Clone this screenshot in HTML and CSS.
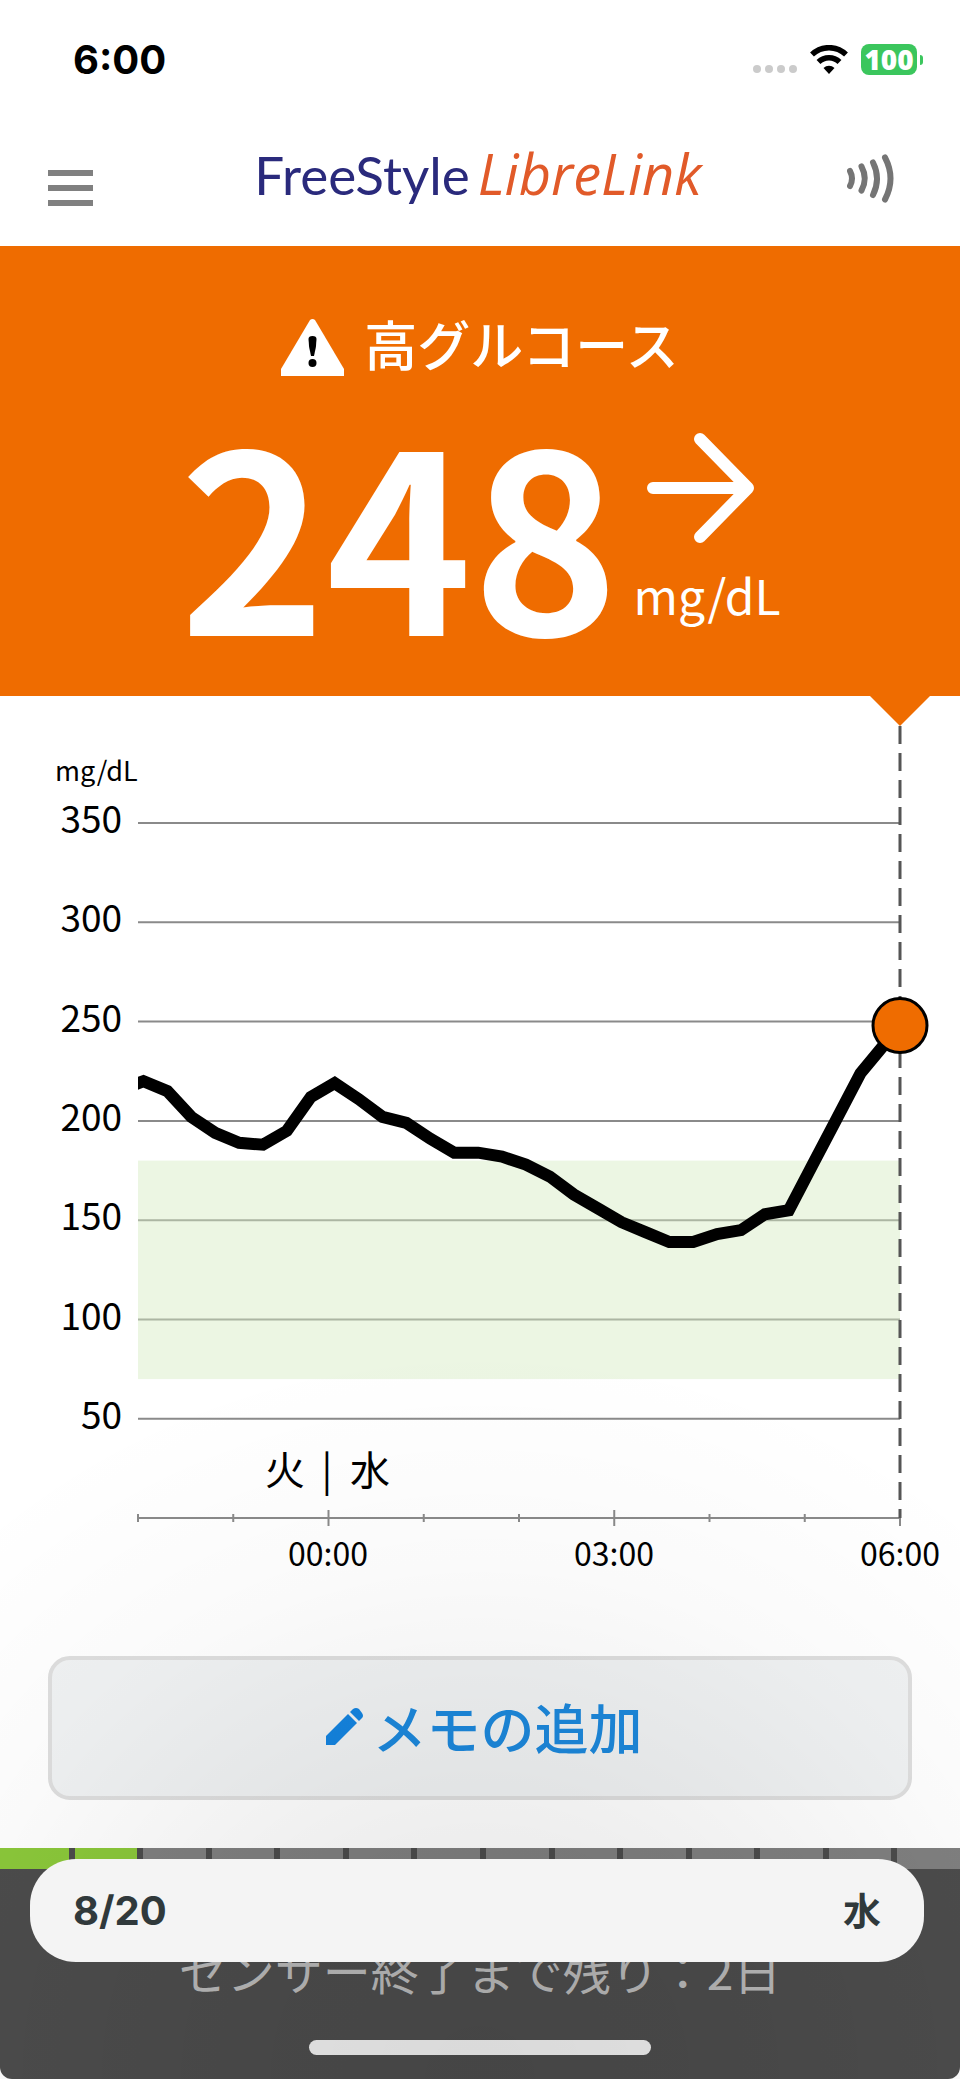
FILE: index.html
```html
<!DOCTYPE html>
<html lang="ja">
<head>
    <meta charset="UTF-8">
    <meta name="viewport" content="width=device-width, initial-scale=1">
    <title>FreeStyle LibreLink</title>
    <link rel="stylesheet" href="styles.css">
</head>
<body>
    <div class="status-bar">
        <span class="clock">6:00</span>
        <div class="status-icons">
            <svg class="signal" width="44" height="8" viewBox="0 0 44 8" fill="#cbcbcb">
                <circle cx="4" cy="4" r="4"/><circle cx="16" cy="4" r="4"/><circle cx="28" cy="4" r="4"/><circle cx="40" cy="4" r="4"/>
            </svg>
            <svg class="wifi" width="38" height="29" viewBox="0 0 38 29">
                <path d="M2 9.500A24.500 24.500 0 0 1 36 9.500" fill="none" stroke="#000" stroke-width="5.500"/>
                <path d="M8.500 17A15 15 0 0 1 29.500 17" fill="none" stroke="#000" stroke-width="5.500"/>
                <path d="M19 29L13.500 23A8 8 0 0 1 24.500 23Z"/>
            </svg>
            <span class="battery">100</span>
        </div>
    </div>

    <header class="app-header">
        <button class="icon-btn" aria-label="メニュー">
            <svg width="45" height="36" viewBox="0 0 45 36" fill="#808080">
                <rect width="45" height="6"/><rect y="15" width="45" height="6"/><rect y="30" width="45" height="6"/>
            </svg>
        </button>
        <h1 class="logo"><span class="logo-free">FreeStyle</span><span class="logo-libre">LibreLink</span></h1>
        <button class="icon-btn scan-btn" aria-label="スキャン">
            <svg width="47" height="49" viewBox="0 0 47 49" fill="none" stroke="#757575" stroke-width="6" stroke-linecap="round">
                <path d="M3 17Q7 24.500 3 32"/>
                <path d="M14.500 12.500Q21 24.500 14.500 36.500"/>
                <path d="M26 8.500Q34 24.500 26 41"/>
                <path d="M38 3.500Q49 24.500 38 45.500"/>
            </svg>
        </button>
    </header>

    <section class="reading">
        <h2 class="alert">
            <svg width="63" height="57" viewBox="0 0 63 57">
                <path d="M29 1Q31.500 -1 34 1L63 50V57H0V50Z" fill="#fff"/>
                <path d="M27.500 20Q27.500 17 31.500 17Q35.500 17 35.500 20Q35.500 28 33 37H30Q27.500 28 27.500 20Z"/>
                <circle cx="31.500" cy="44" r="4"/>
            </svg>
            高グルコース
        </h2>
        <div class="value-row">
            <span class="value">248</span>
            <div class="trend">
                <svg class="arrow" width="108" height="110" viewBox="0 0 108 110" fill="none" stroke="#fff" stroke-width="12" stroke-linecap="round" stroke-linejoin="round">
                    <path d="M6 55H100M53 6L101 55L53 104"/>
                </svg>
                <span class="unit">mg/dL</span>
            </div>
        </div>
    </section>

    <svg class="chart" id="chart" viewBox="0 0 960 904" role="img" aria-label="グルコースグラフ"></svg>

    <div class="actions">
        <button class="note-btn">
            <svg width="37" height="37" viewBox="0 0 37 37" fill="#1484e0">
                <path d="M0 28L22 6L31 15L9 37H0Z"/>
                <path d="M24 4L27 1Q30 -1 33 1L36 5Q38 8 36 10L33 13Z"/>
            </svg>
            メモの追加
        </button>
    </div>

    <footer class="sensor">
        <div class="sensor-days" id="sensorDays"></div>
        <p class="sensor-text">センサー終了まで残り：2日</p>
        <div class="home-bar"></div>
        <div class="date-pill"><span>8/20</span><span class="weekday">水</span></div>
    </footer>

    <script>
    const readings = [220, 215, 202, 194, 189, 188, 195, 212, 219, 211, 202, 199, 191, 184, 184, 182,
        178, 172, 163, 156, 149, 144, 139, 139, 143, 145, 153, 155, 178, 201, 224];
    const current = 248;
    const left = 138, right = 900, axisY = 822;

    function yPos(value) {
        return 127 + (350 - value) * 1.986;
    }

    function drawChart() {
        let svg = '<clipPath id="plot"><rect x="138" y="0" width="822" height="904"/></clipPath>';
        svg += '<text class="chart-unit" x="55" y="85">mg/dL</text>';

        for (let v = 350; v >= 50; v -= 50) {
            const y = yPos(v);
            svg += `<line class="grid" x1="${left}" x2="${right}" y1="${y}" y2="${y}"/>`;
            svg += `<text class="y-label" x="122" y="${Math.round(y) + 10}">${v}</text>`;
        }

        // target range 70 - 180
        svg += `<rect class="target" x="${left}" y="${yPos(180)}" width="${right - left}" height="${yPos(70) - yPos(180)}"/>`;

        // hour ticks, long ones every third hour
        svg += `<line class="grid" x1="${left}" x2="${right}" y1="${axisY}" y2="${axisY}"/>`;
        for (let i = 0; i <= 8; i++) {
            const x = left + i * (right - left) / 8;
            const len = (i - 2) % 3 === 0 ? 8 : 4;
            svg += `<line class="grid" x1="${x}" x2="${x}" y1="${axisY - len}" y2="${axisY + len}"/>`;
        }
        svg += '<text class="x-label" x="328" y="870">00:00</text>';
        svg += '<text class="x-label" x="614" y="870">03:00</text>';
        svg += '<text class="x-label" x="900" y="870">06:00</text>';
        svg += '<text class="day-label" x="285" y="789">火</text>';
        svg += '<text class="day-label" x="327" y="789">|</text>';
        svg += '<text class="day-label" x="370" y="789">水</text>';

        svg += `<line class="now-line" x1="${right}" x2="${right}" y1="30" y2="${axisY}"/>`;
        svg += `<path class="marker" d="M870 0H930L900 30Z"/>`;

        let points = `${left - 10},${yPos(217)}`;
        readings.forEach((v, i) => {
            points += ` ${143.5 + i * 23.9},${yPos(v)}`;
        });
        points += ` ${right},${yPos(current)}`;
        svg += `<polyline class="curve" clip-path="url(#plot)" points="${points}"/>`;
        svg += `<circle class="now-dot" cx="${right}" cy="${yPos(current)}" r="27"/>`;

        document.getElementById('chart').innerHTML = svg;
    }

    function drawSensorDays() {
        let html = '';
        for (let day = 0; day < 14; day++) {
            html += `<span class="day${day < 2 ? ' left' : ''}"></span>`;
        }
        document.getElementById('sensorDays').innerHTML = html;
    }

    drawChart();
    drawSensorDays();
    </script>
</body>
</html>
```
FILE: styles.css
```css
* {
    box-sizing: border-box;
}

body {
    margin: 0;
    position: relative;
    background-color: #fff;
    color: #000;
    font-family: "Noto Sans CJK JP", sans-serif;
}

/* soft shade rising from the bottom of the screen */
body::after {
    content: "";
    position: absolute;
    left: 0;
    right: 0;
    bottom: 0;
    height: 740px;
    background: radial-gradient(ellipse 80% 100% at 50% 100%, rgba(0, 0, 0, 0.09), rgba(0, 0, 0, 0.07) 30%, rgba(0, 0, 0, 0.02) 70%, transparent);
    pointer-events: none;
}

button {
    border: none;
    background: none;
    padding: 0;
    cursor: pointer;
    font-family: inherit;
}

svg {
    display: block;
    flex: none;
}

.status-bar {
    display: flex;
    justify-content: space-between;
    align-items: center;
    height: 118px;
    padding: 0 43px 0 73px;
}

.clock {
    font-family: Inter, sans-serif;
    font-size: 40px;
    font-weight: 700;
}

.status-icons {
    display: flex;
    align-items: center;
    gap: 13px;
}

.signal {
    margin-top: 20px;
}

.battery {
    position: relative;
    width: 56px;
    height: 31px;
    border-radius: 8px;
    background-color: #3bc65d;
    color: #fff;
    font-family: "Open Sans", sans-serif;
    font-size: 28px;
    font-weight: 800;
    line-height: 30px;
    text-align: center;
}

.battery::after {
    content: "";
    position: absolute;
    left: 59px;
    top: 11px;
    width: 3px;
    height: 10px;
    border-radius: 0 3px 3px 0;
    background-color: #3bc65d;
}

.app-header {
    display: flex;
    justify-content: space-between;
    align-items: center;
    height: 128px;
    padding: 0 66px 8px 48px;
}

.app-header .icon-btn:first-child {
    padding-top: 20px;
}

.logo {
    display: flex;
    align-items: baseline;
    gap: 8px;
    margin: 0;
    padding: 0 0 8px 16px;
    font-weight: 400;
    line-height: 64px;
}

.logo-free {
    color: #2a2a7c;
    font-family: Lato, sans-serif;
    font-size: 53px;
}

.logo-libre {
    color: #e15a29;
    font-family: "Open Sans", sans-serif;
    font-size: 56px;
    font-style: italic;
    font-weight: 500;
}

.reading {
    padding: 67px 0 64px;
    background-color: #ef6c00;
    color: #fff;
}

.alert {
    display: flex;
    justify-content: center;
    align-items: center;
    gap: 20px;
    height: 60px;
    margin: 0 0 49px;
    font-size: 53px;
    font-weight: 500;
    line-height: 60px;
}

.alert svg {
    margin-top: 8px;
}

.value-row {
    display: flex;
    justify-content: center;
    gap: 15px;
    height: 210px;
}

.value {
    font-size: 248px;
    font-weight: 700;
    line-height: 212px;
}

.trend {
    padding-top: 11px;
}

.arrow {
    margin: 0 0 23px 14px;
}

.unit {
    display: block;
    font-size: 48px;
    line-height: 56px;
}

.chart {
    width: 100%;
    height: auto;
}

.grid {
    stroke: #8a8a8a;
    stroke-width: 2;
}

.target {
    fill: rgba(213, 236, 192, 0.45);
}

.chart-unit {
    font-size: 27px;
}

.y-label {
    font-size: 37px;
    text-anchor: end;
}

.x-label {
    font-size: 32px;
    text-anchor: middle;
}

.day-label {
    font-size: 40px;
    text-anchor: middle;
}

.now-line {
    stroke: #555;
    stroke-width: 3;
    stroke-dasharray: 18 9;
}

.marker {
    fill: #ef6c00;
}

.curve {
    fill: none;
    stroke: #000;
    stroke-width: 12;
}

.now-dot {
    fill: #ef6c00;
    stroke: #000;
    stroke-width: 3;
}

.actions {
    padding: 56px 48px 48px;
}

.note-btn {
    display: flex;
    justify-content: center;
    align-items: center;
    gap: 10px;
    width: 100%;
    height: 144px;
    padding: 0 0 4px 8px;
    border: 4px solid #dedede;
    border-radius: 22px;
    background-color: #f0f2f3;
    color: #1c88dc;
    font-size: 54px;
    font-weight: 500;
}

.sensor {
    position: relative;
    padding-bottom: 24px;
    border-radius: 0 0 12px 12px;
    background-color: #4c4c4c;
}

.sensor-days {
    display: grid;
    grid-template-columns: repeat(14, 1fr);
    height: 21px;
}

.day {
    border-left: 6px solid #4c4c4c;
    background-color: #808080;
}

.day:first-child {
    border-left: none;
}

.day.left {
    background-color: #8bc83a;
}

.sensor-text {
    margin: 70px 0 41px;
    color: #b8b8b8;
    font-size: 48px;
    font-weight: 400;
    line-height: 60px;
    text-align: center;
}

.home-bar {
    width: 342px;
    height: 15px;
    margin: 0 auto;
    border-radius: 8px;
    background-color: #efefef;
}

/* floats over the sensor bar */
.date-pill {
    position: absolute;
    z-index: 1;
    top: 11px;
    left: 30px;
    right: 36px;
    display: flex;
    justify-content: space-between;
    align-items: baseline;
    height: 103px;
    padding: 26px 43px 0;
    border-radius: 46px;
    background-color: #f4f4f4;
    color: #30393b;
    font-family: Inter, sans-serif;
    font-size: 40px;
    font-weight: 700;
    line-height: 48px;
}

.weekday {
    font-family: "Noto Sans CJK JP", sans-serif;
    font-size: 38px;
}
```
